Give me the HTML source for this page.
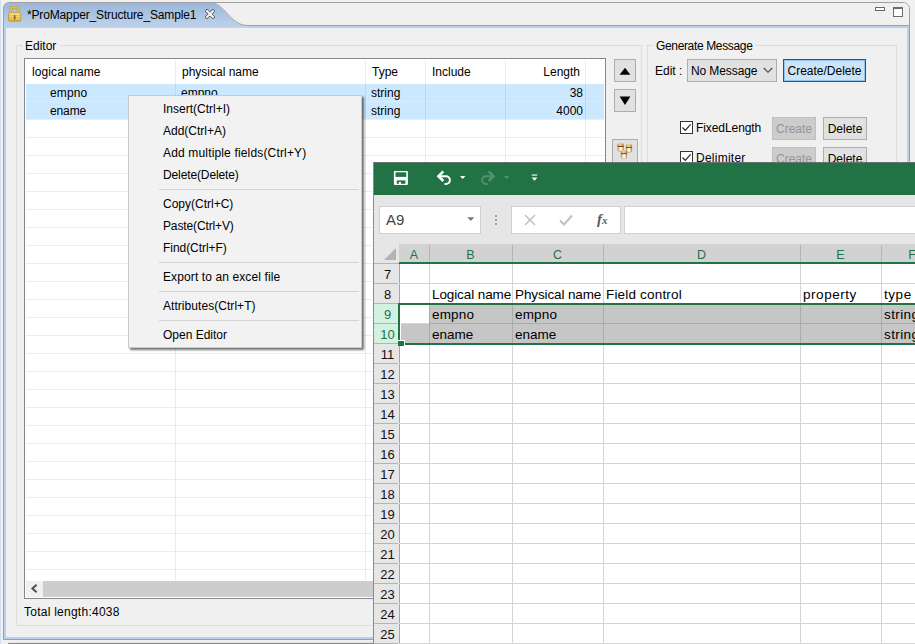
<!DOCTYPE html>
<html>
<head>
<meta charset="utf-8">
<title>ProMapper</title>
<style>
*{box-sizing:border-box;margin:0;padding:0}
html,body{width:915px;height:644px;overflow:hidden;background:#f0f0f0;font-family:"Liberation Sans",sans-serif;font-size:12px;color:#000}
.a{position:absolute}
.t{position:absolute;white-space:nowrap;line-height:14px;height:14px}
/* eclipse frame */
#frame{left:3px;top:2px;width:907px;height:638px;border:1px solid #a0a0a0;border-radius:7px 7px 0 0;background:#f0f0f0;overflow:hidden}
#tabbar{left:0;top:0;width:905px;height:23px;background:#f0f0f0;border-bottom:1px solid #a0a0a0}
#blueframe{left:0;top:23px;width:905px;height:613px;border:2px solid #b9d1ea;border-top-width:2px}
/* table */
#tbl{left:24px;top:58px;width:582px;height:541px;border:1px solid #828790;background:#fff;overflow:hidden}
.hl{position:absolute;left:1px;width:578px;height:1px;background:#ededed}
.vl{position:absolute;top:1px;width:1px;height:521px;background:rgba(0,0,0,.075)}
.sel{position:absolute;left:1px;width:578px;height:17px;background:#cce8ff}
.btn{position:absolute;border:1px solid #adadad;background:#e1e1e1;text-align:center}
/* menu */
#menu{left:128px;top:95px;width:234px;height:253px;background:#f2f2f2;border:1px solid #cacaca;box-shadow:2px 2px 2px rgba(0,0,0,.55)}
.mi{position:absolute;left:34px;white-space:nowrap;line-height:14px;height:14px}
.ms{position:absolute;left:30px;width:200px;height:1px;background:#d4d4d4}
/* excel */
#xl{left:373px;top:162px;width:542px;height:482px;background:#fff;overflow:hidden}
.xg{position:absolute;background:#d4d4d4}
.rn{position:absolute;left:2px;width:25px;text-align:center;font-size:13px;line-height:18px;height:18px;color:#111}
.ch{position:absolute;top:85px;height:19px;text-align:center;font-size:12.5px;line-height:19px;color:#217346}
.ct{position:absolute;white-space:nowrap;font-size:13.5px;line-height:18px;height:18px;color:#000}
</style>
</head>
<body>
<!-- left outer strip -->
<div class="a" style="left:0;top:0;width:1px;height:644px;background:#d6dfef"></div>

<div id="frame" class="a">
  <div id="tabbar" class="a"></div>
  <div id="blueframe" class="a"></div>
</div>

<!-- active tab shape -->
<svg class="a" style="left:0;top:0" width="300" height="30" viewBox="0 0 300 30">
  <defs>
    <linearGradient id="tg" x1="0" y1="0" x2="0" y2="1">
      <stop offset="0" stop-color="#9bb6da"/>
      <stop offset="1" stop-color="#bfd4ec"/>
    </linearGradient>
  </defs>
  <path d="M4 28 L4 9 Q4 3 10 3 L210 3 C219 3 224 11 231 18 C238 24.5 242 25.5 249 25.5 L249 28 Z" fill="url(#tg)"/>
  <path d="M3.5 28 L3.5 9 Q3.5 2.5 10 2.5 L210 2.5 C219 2.5 224 10.5 231 17.5 C238 24 242 25.5 249 25.5" fill="none" stroke="#a0a0a0" stroke-width="1"/>
</svg>

<!-- lock icon -->
<svg class="a" style="left:7px;top:5px" width="16" height="18" viewBox="0 0 16 18">
  <defs><linearGradient id="lg" x1="0" y1="0" x2="0" y2="1"><stop offset="0" stop-color="#f0cf62"/><stop offset="1" stop-color="#d9a92f"/></linearGradient></defs>
  <path d="M3.9 8.5 V4.7 Q3.9 2.2 6.4 2.2 H8.8 Q11.3 2.2 11.3 4.7 V8.5" fill="none" stroke="#c99b2a" stroke-width="2.5"/>
  <path d="M3.9 8.5 V4.7 Q3.9 2.2 6.4 2.2 H8.8 Q11.3 2.2 11.3 4.7 V8.5" fill="none" stroke="#f1d26e" stroke-width="1"/>
  <rect x="1.5" y="7.7" width="12.3" height="8.6" rx="1.2" fill="url(#lg)" stroke="#c4952a" stroke-width=".8"/>
  <rect x="2.2" y="8.4" width="10.9" height="1.2" fill="#f8e596"/>
  <rect x="2.2" y="11.2" width="10.9" height=".8" fill="#f5de85"/>
  <rect x="2.2" y="13.4" width="10.9" height=".8" fill="#f5de85"/>
  <rect x="6.8" y="10" width="1.7" height="4.8" rx=".8" fill="#8b6a16"/>
</svg>
<div class="t" style="left:27px;top:8px;font-size:12px;letter-spacing:-0.15px">*ProMapper_Structure_Sample1</div>
<!-- tab close X -->
<svg class="a" style="left:205px;top:9px" width="10" height="10" viewBox="0 0 10 10">
  <path d="M2 2 L8 8 M8 2 L2 8" stroke="#5a5a5a" stroke-width="3.4" stroke-linecap="square"/>
  <path d="M2 2 L8 8 M8 2 L2 8" stroke="#ffffff" stroke-width="1.9" stroke-linecap="square"/>
</svg>

<!-- min/max icons -->
<div class="a" style="left:875px;top:7px;width:10px;height:4px;border:1px solid #6b6b6b;background:#fff"></div>
<div class="a" style="left:893px;top:7px;width:10px;height:10px;border:1px solid #6b6b6b;border-top-width:2px;background:#fff"></div>

<!-- Editor group -->
<div class="a" style="left:16px;top:45px;width:626px;height:581px;border:1px solid #dcdcdc"></div>
<div class="t" style="left:22px;top:39px;background:#f0f0f0;padding:0 3px">Editor</div>

<div id="tbl" class="a">
  <div class="sel" style="top:25px"></div>
  <div class="sel" style="top:43px"></div>
  <!--GRID--><div class="hl" style="top:60px"></div><div class="hl" style="top:78px"></div><div class="hl" style="top:96px"></div><div class="hl" style="top:114px"></div><div class="hl" style="top:132px"></div><div class="hl" style="top:150px"></div><div class="hl" style="top:168px"></div><div class="hl" style="top:186px"></div><div class="hl" style="top:204px"></div><div class="hl" style="top:222px"></div><div class="hl" style="top:240px"></div><div class="hl" style="top:258px"></div><div class="hl" style="top:276px"></div><div class="hl" style="top:294px"></div><div class="hl" style="top:312px"></div><div class="hl" style="top:330px"></div><div class="hl" style="top:348px"></div><div class="hl" style="top:366px"></div><div class="hl" style="top:384px"></div><div class="hl" style="top:402px"></div><div class="hl" style="top:420px"></div><div class="hl" style="top:438px"></div><div class="hl" style="top:456px"></div><div class="hl" style="top:474px"></div><div class="hl" style="top:492px"></div><div class="hl" style="top:510px"></div><div class="hl" style="top:42px;background:#e2eaf0"></div><div class="vl" style="left:150px"></div><div class="vl" style="left:340px"></div><div class="vl" style="left:400px"></div><div class="vl" style="left:480px"></div><div class="vl" style="left:560px"></div><!--/GRID-->
  <!-- scrollbar -->
  <div class="a" style="left:1px;top:522px;width:578px;height:16px;background:#f0f0f0"></div>
  <div class="a" style="left:18px;top:522px;width:561px;height:16px;background:#cdcdcd"></div>
  <svg class="a" style="left:5px;top:525px" width="8" height="9" viewBox="0 0 8 9"><path d="M6.6 0.8 L2.4 4.5 L6.6 8.2" fill="none" stroke="#505050" stroke-width="2"/></svg>
  <!-- header -->
  <div class="t" style="left:7px;top:6px;letter-spacing:.1px">logical name</div>
  <div class="t" style="left:157px;top:6px">physical name</div>
  <div class="t" style="left:347px;top:6px">Type</div>
  <div class="t" style="left:407px;top:6px">Include</div>
  <div class="t" style="left:480px;top:6px;width:75px;text-align:right">Length</div>
  <!-- rows -->
  <div class="t" style="left:25px;top:27px;letter-spacing:.15px">empno</div>
  <div class="t" style="left:156px;top:27px">empno</div>
  <div class="t" style="left:346px;top:27px">string</div>
  <div class="t" style="left:480px;top:27px;width:78px;text-align:right">38</div>
  <div class="t" style="left:25px;top:45px;letter-spacing:-.12px">ename</div>
  <div class="t" style="left:346px;top:45px">string</div>
  <div class="t" style="left:480px;top:45px;width:78px;text-align:right">4000</div>
</div>

<div class="t" style="left:24px;top:605px;letter-spacing:.25px">Total length:4038</div>

<!-- up/down buttons -->
<div class="btn" style="left:614px;top:59px;width:22px;height:23px"></div>
<svg class="a" style="left:619px;top:67px" width="12" height="8" viewBox="0 0 12 8"><path d="M0.6 7.8 L6 0.8 L11.4 7.8 Z" fill="#000"/></svg>
<div class="btn" style="left:614px;top:89px;width:22px;height:23px"></div>
<svg class="a" style="left:619px;top:96px" width="12" height="10" viewBox="0 0 12 10"><path d="M0.6 0.6 L11.4 0.6 L6 9 Z" fill="#000"/></svg>
<div class="btn" style="left:612px;top:139px;width:26px;height:26px"></div>
<svg class="a" style="left:612px;top:139px" width="26" height="24" viewBox="0 0 26 24">
  <defs>
    <linearGradient id="cb" x1="0" y1="0" x2="1" y2="0">
      <stop offset="0" stop-color="#a98a52"/><stop offset=".35" stop-color="#f4f1ec"/><stop offset=".6" stop-color="#ffffff"/><stop offset="1" stop-color="#a58548"/>
    </linearGradient>
    <linearGradient id="ct" x1="0" y1="0" x2="1" y2="0">
      <stop offset="0" stop-color="#c79a3c"/><stop offset=".45" stop-color="#f0d68e"/><stop offset="1" stop-color="#b98a2e"/>
    </linearGradient>
  </defs>
  <g transform="translate(5.5 4)"><rect x="0" y="0.4" width="6.3" height="7.9" rx="1.8" fill="url(#cb)"/><path d="M0 3 V1.9 Q0 0 3.15 0 Q6.3 0 6.3 1.9 V3 Z" fill="url(#ct)"/><rect x="0.2" y="3" width="5.9" height="1" fill="#8c2f22"/><path d="M0.4 7.2 Q3.15 8.8 5.9 7.2 L5.6 7.9 Q3.15 8.9 0.7 7.9 Z" fill="#b48a3a"/></g>
  <g transform="translate(13.8 5.1)"><rect x="0" y="0.4" width="6.3" height="7.9" rx="1.8" fill="url(#cb)"/><path d="M0 3 V1.9 Q0 0 3.15 0 Q6.3 0 6.3 1.9 V3 Z" fill="url(#ct)"/><rect x="0.2" y="3" width="5.9" height="1" fill="#8c2f22"/><path d="M0.4 7.2 Q3.15 8.8 5.9 7.2 L5.6 7.9 Q3.15 8.9 0.7 7.9 Z" fill="#b48a3a"/></g>
  <g transform="translate(8.8 11.2)"><rect x="0" y="0.4" width="6.3" height="7.9" rx="1.8" fill="url(#cb)"/><path d="M0 3 V1.9 Q0 0 3.15 0 Q6.3 0 6.3 1.9 V3 Z" fill="url(#ct)"/><rect x="0.2" y="3" width="5.9" height="1" fill="#8c2f22"/><path d="M0.4 7.2 Q3.15 8.8 5.9 7.2 L5.6 7.9 Q3.15 8.9 0.7 7.9 Z" fill="#b48a3a"/></g>
</svg>

<!-- Generate Message group -->
<div class="a" style="left:647px;top:45px;width:250px;height:581px;border:1px solid #dcdcdc"></div>
<div class="t" style="left:653px;top:39px;background:#f0f0f0;padding:0 3px;letter-spacing:-.35px">Generate Message</div>
<div class="t" style="left:655px;top:64px">Edit :</div>
<div class="btn" style="left:687px;top:59px;width:90px;height:23px"></div>
<div class="t" style="left:691px;top:64px;letter-spacing:-.1px">No Message</div>
<svg class="a" style="left:763px;top:67px" width="10" height="7" viewBox="0 0 10 7"><path d="M0.8 1 L5 5.3 L9.2 1" fill="none" stroke="#444" stroke-width="1.1"/></svg>
<div class="btn" style="left:783px;top:59px;width:83px;height:23px;background:#cce4f7;border:1px solid #0a5ca8;box-shadow:inset 0 0 0 1px rgba(0,120,215,.28)"></div>
<div class="t" style="left:783px;top:64px;width:83px;text-align:center">Create/Delete</div>

<!-- checkboxes -->
<div class="a" style="left:680px;top:121px;width:13px;height:13px;border:1px solid #333;background:#fff"></div>
<svg class="a" style="left:680px;top:121px" width="13" height="13" viewBox="0 0 13 13"><path d="M2.5 6.5 L5.3 9.3 L10.6 3.3" fill="none" stroke="#222" stroke-width="1.2"/></svg>
<div class="t" style="left:696px;top:121px;letter-spacing:-.08px">FixedLength</div>
<div class="btn" style="left:772px;top:117px;width:44px;height:23px;background:#cccccc;border-color:#bfbfbf"></div>
<div class="t" style="left:772px;top:122px;width:44px;text-align:center;color:#959595">Create</div>
<div class="btn" style="left:823px;top:117px;width:44px;height:23px"></div>
<div class="t" style="left:823px;top:122px;width:44px;text-align:center">Delete</div>

<div class="a" style="left:680px;top:151px;width:13px;height:13px;border:1px solid #333;background:#fff"></div>
<svg class="a" style="left:680px;top:151px" width="13" height="13" viewBox="0 0 13 13"><path d="M2.5 6.5 L5.3 9.3 L10.6 3.3" fill="none" stroke="#222" stroke-width="1.2"/></svg>
<div class="t" style="left:696px;top:151px;letter-spacing:.25px">Delimiter</div>
<div class="btn" style="left:772px;top:147px;width:44px;height:23px;background:#cccccc;border-color:#bfbfbf"></div>
<div class="t" style="left:772px;top:152px;width:44px;text-align:center;color:#959595">Create</div>
<div class="btn" style="left:823px;top:147px;width:44px;height:23px"></div>
<div class="t" style="left:823px;top:152px;width:44px;text-align:center">Delete</div>

<!-- bottom line of next view -->
<div class="a" style="left:9px;top:642px;width:906px;height:1px;background:#e2e2e2"></div>
<div class="a" style="left:8px;top:643px;width:907px;height:1px;background:#8c8c8c"></div>

<!-- EXCEL -->
<div id="xl" class="a">
<div class="a" style="left:0;top:-1px;width:542px;height:483px">
  <div class="a" style="left:0;top:0;width:542px;height:34px;background:#217346"></div>
  <div class="a" style="left:0;top:1px;width:542px;height:1px;background:#6e6e6e"></div>
  <div class="a" style="left:0;top:34px;width:542px;height:49px;background:#e6e6e6"></div>
  <!--XL--><div class="a" style="left:1px;top:83px;width:25px;height:20px;background:#e6e6e6"></div><div class="a" style="left:26px;top:83px;width:516px;height:18px;background:#d2d2d2"></div><div class="a" style="left:26px;top:101px;width:516px;height:2px;background:#217346"></div><svg class="a" style="left:11px;top:87px" width="12" height="12" viewBox="0 0 12 12"><path d="M12 0 L12 12 L0 12 Z" fill="#b3b3b3"/></svg><div class="ch" style="left:26px;width:30px">A</div><div class="ch" style="left:56px;width:83px">B</div><div class="ch" style="left:139px;width:91px">C</div><div class="ch" style="left:230px;width:197px">D</div><div class="ch" style="left:427px;width:81px">E</div><div class="ch" style="left:508px;width:62px">F</div><div class="a" style="left:56px;top:84px;width:1px;height:17px;background:#b4b4b4"></div><div class="a" style="left:139px;top:84px;width:1px;height:17px;background:#b4b4b4"></div><div class="a" style="left:230px;top:84px;width:1px;height:17px;background:#b4b4b4"></div><div class="a" style="left:427px;top:84px;width:1px;height:17px;background:#b4b4b4"></div><div class="a" style="left:508px;top:84px;width:1px;height:17px;background:#b4b4b4"></div><div class="a" style="left:1px;top:103px;width:25px;height:380px;background:#e6e6e6"></div><div class="a" style="left:26px;top:103px;width:1px;height:380px;background:#a6a6a6"></div><div class="a" style="left:1px;top:102px;width:25px;height:1px;background:#b4b4b4"></div><div class="a" style="left:1px;top:143px;width:24px;height:40px;background:#d3f0e0"></div><div class="a" style="left:26px;top:143px;width:516px;height:40px;background:#c6c6c6"></div><div class="a" style="left:28px;top:144px;width:28px;height:19px;background:#fff"></div><div class="xg" style="left:26px;top:122px;width:516px;height:1px"></div><div class="a" style="left:1px;top:122px;width:24px;height:1px;background:#b4b4b4"></div><div class="rn" style="top:105px;color:#111">7</div><div class="xg" style="left:26px;top:142px;width:516px;height:1px"></div><div class="a" style="left:1px;top:142px;width:24px;height:1px;background:#b4b4b4"></div><div class="rn" style="top:125px;color:#111">8</div><div class="xg" style="left:26px;top:162px;width:516px;height:1px"></div><div class="a" style="left:1px;top:162px;width:24px;height:1px;background:#b4b4b4"></div><div class="rn" style="top:145px;color:#217346">9</div><div class="xg" style="left:26px;top:182px;width:516px;height:1px"></div><div class="a" style="left:1px;top:182px;width:24px;height:1px;background:#b4b4b4"></div><div class="rn" style="top:165px;color:#217346">10</div><div class="xg" style="left:26px;top:202px;width:516px;height:1px"></div><div class="a" style="left:1px;top:202px;width:24px;height:1px;background:#b4b4b4"></div><div class="rn" style="top:185px;color:#111">11</div><div class="xg" style="left:26px;top:222px;width:516px;height:1px"></div><div class="a" style="left:1px;top:222px;width:24px;height:1px;background:#b4b4b4"></div><div class="rn" style="top:205px;color:#111">12</div><div class="xg" style="left:26px;top:242px;width:516px;height:1px"></div><div class="a" style="left:1px;top:242px;width:24px;height:1px;background:#b4b4b4"></div><div class="rn" style="top:225px;color:#111">13</div><div class="xg" style="left:26px;top:262px;width:516px;height:1px"></div><div class="a" style="left:1px;top:262px;width:24px;height:1px;background:#b4b4b4"></div><div class="rn" style="top:245px;color:#111">14</div><div class="xg" style="left:26px;top:282px;width:516px;height:1px"></div><div class="a" style="left:1px;top:282px;width:24px;height:1px;background:#b4b4b4"></div><div class="rn" style="top:265px;color:#111">15</div><div class="xg" style="left:26px;top:302px;width:516px;height:1px"></div><div class="a" style="left:1px;top:302px;width:24px;height:1px;background:#b4b4b4"></div><div class="rn" style="top:285px;color:#111">16</div><div class="xg" style="left:26px;top:322px;width:516px;height:1px"></div><div class="a" style="left:1px;top:322px;width:24px;height:1px;background:#b4b4b4"></div><div class="rn" style="top:305px;color:#111">17</div><div class="xg" style="left:26px;top:342px;width:516px;height:1px"></div><div class="a" style="left:1px;top:342px;width:24px;height:1px;background:#b4b4b4"></div><div class="rn" style="top:325px;color:#111">18</div><div class="xg" style="left:26px;top:362px;width:516px;height:1px"></div><div class="a" style="left:1px;top:362px;width:24px;height:1px;background:#b4b4b4"></div><div class="rn" style="top:345px;color:#111">19</div><div class="xg" style="left:26px;top:382px;width:516px;height:1px"></div><div class="a" style="left:1px;top:382px;width:24px;height:1px;background:#b4b4b4"></div><div class="rn" style="top:365px;color:#111">20</div><div class="xg" style="left:26px;top:402px;width:516px;height:1px"></div><div class="a" style="left:1px;top:402px;width:24px;height:1px;background:#b4b4b4"></div><div class="rn" style="top:385px;color:#111">21</div><div class="xg" style="left:26px;top:422px;width:516px;height:1px"></div><div class="a" style="left:1px;top:422px;width:24px;height:1px;background:#b4b4b4"></div><div class="rn" style="top:405px;color:#111">22</div><div class="xg" style="left:26px;top:442px;width:516px;height:1px"></div><div class="a" style="left:1px;top:442px;width:24px;height:1px;background:#b4b4b4"></div><div class="rn" style="top:425px;color:#111">23</div><div class="xg" style="left:26px;top:462px;width:516px;height:1px"></div><div class="a" style="left:1px;top:462px;width:24px;height:1px;background:#b4b4b4"></div><div class="rn" style="top:445px;color:#111">24</div><div class="xg" style="left:26px;top:482px;width:516px;height:1px"></div><div class="a" style="left:1px;top:482px;width:24px;height:1px;background:#b4b4b4"></div><div class="rn" style="top:465px;color:#111">25</div><div class="xg" style="left:56px;top:103px;width:1px;height:380px"></div><div class="xg" style="left:139px;top:103px;width:1px;height:380px"></div><div class="xg" style="left:230px;top:103px;width:1px;height:380px"></div><div class="xg" style="left:427px;top:103px;width:1px;height:380px"></div><div class="xg" style="left:508px;top:103px;width:1px;height:380px"></div><div class="a" style="left:56px;top:144px;width:1px;height:39px;background:#ababab"></div><div class="a" style="left:139px;top:144px;width:1px;height:39px;background:#ababab"></div><div class="a" style="left:230px;top:144px;width:1px;height:39px;background:#ababab"></div><div class="a" style="left:427px;top:144px;width:1px;height:39px;background:#ababab"></div><div class="a" style="left:508px;top:144px;width:1px;height:39px;background:#ababab"></div><div class="a" style="left:56px;top:162px;width:486px;height:1px;background:#ababab"></div><div class="a" style="left:26px;top:142px;width:516px;height:2px;background:#217346"></div><div class="a" style="left:26px;top:182px;width:516px;height:2px;background:#217346"></div><div class="a" style="left:27px;top:144px;width:1px;height:38px;background:#fff"></div><div class="a" style="left:25px;top:142px;width:2px;height:42px;background:#217346"></div><div class="a" style="left:25px;top:179px;width:7px;height:6px;background:#217346;border-top:1px solid #fff;border-right:1px solid #fff"></div><div class="a" style="left:0;top:0;width:1px;height:483px;background:#8c8c8c"></div><div class="ct" style="left:59px;top:125px;letter-spacing:-0.1px">Logical name</div><div class="ct" style="left:142px;top:125px;letter-spacing:-0.12px">Physical name</div><div class="ct" style="left:233px;top:125px;letter-spacing:0.18px">Field control</div><div class="ct" style="left:430px;top:125px;letter-spacing:0.55px">property</div><div class="ct" style="left:511px;top:125px;letter-spacing:0.55px">type</div><div class="ct" style="left:59px;top:145px;letter-spacing:0.18px">empno</div><div class="ct" style="left:142px;top:145px;letter-spacing:0.18px">empno</div><div class="ct" style="left:511px;top:145px;letter-spacing:0.4px">string</div><div class="ct" style="left:59px;top:165px;letter-spacing:0px">ename</div><div class="ct" style="left:142px;top:165px;letter-spacing:0px">ename</div><div class="ct" style="left:511px;top:165px;letter-spacing:0.4px">string</div><div class="a" style="left:6px;top:45px;width:102px;height:28px;background:#fff;border:1px solid #d0d0d0"></div><div class="a" style="left:13px;top:50px;font-size:15px;line-height:18px;color:#444">A9</div><svg class="a" style="left:94px;top:56px" width="8" height="5" viewBox="0 0 8 5"><path d="M0.3 0.3 L7.3 0.3 L3.8 4 Z" fill="#777"/></svg><div class="a" style="left:122px;top:54px;width:2px;height:2px;background:#a0a0a0;box-shadow:0 4px 0 #a0a0a0,0 8px 0 #a0a0a0"></div><div class="a" style="left:138px;top:45px;width:110px;height:28px;background:#fff;border:1px solid #d0d0d0"></div><svg class="a" style="left:151px;top:53px" width="12" height="12" viewBox="0 0 12 12"><path d="M1 1 L11 11 M11 1 L1 11" stroke="#c0c0c0" stroke-width="1.5" fill="none"/></svg><svg class="a" style="left:186px;top:53px" width="14" height="12" viewBox="0 0 14 12"><path d="M1 6.5 L5 10.5 L13 1.5" stroke="#c0c0c0" stroke-width="2" fill="none"/></svg><div class="a" style="left:224px;top:49px;font-family:'Liberation Serif',serif;font-style:italic;font-weight:bold;font-size:15px;line-height:18px;color:#5a5a5a">f<span style="font-size:11px">x</span></div><div class="a" style="left:251px;top:45px;width:300px;height:28px;background:#fff;border:1px solid #d0d0d0"></div><svg class="a" style="left:20px;top:9px" width="16" height="16" viewBox="20 9 16 16"><rect x="20.9" y="10" width="14" height="14" rx="1" fill="#fff"/><rect x="22.5" y="11.3" width="10.8" height="4.6" fill="#217346"/><rect x="23.8" y="19.2" width="8.6" height="3.6" fill="#217346"/><rect x="25.9" y="20.9" width="2" height="2.1" fill="#fff"/><path d="M22 15.9 L23.4 19.2 H32.8 L33.9 15.9 Z" fill="#fff"/></svg><svg class="a" style="left:62px;top:8px" width="18" height="18" viewBox="62 8 18 18"><path d="M66 15.2 H73 a3.9 3.9 0 0 1 0 7.8 H71.5" fill="none" stroke="#fff" stroke-width="2"/><path d="M70.3 10.4 L65.5 15.2 L70.3 20" fill="none" stroke="#fff" stroke-width="2.6"/></svg><svg class="a" style="left:87px;top:15px" width="6" height="4" viewBox="0 0 6 4"><path d="M0 0 L5.4 0 L2.7 3 Z" fill="#fff"/></svg><svg class="a" style="left:106px;top:8px" width="18" height="18" viewBox="106 8 18 18"><path d="M120 15.2 H113 a3.9 3.9 0 0 0 0 7.8 H114.5" fill="none" stroke="#4f946f" stroke-width="2"/><path d="M115.7 10.4 L120.5 15.2 L115.7 20" fill="none" stroke="#4f946f" stroke-width="2.6"/></svg><svg class="a" style="left:131px;top:15px" width="6" height="4" viewBox="0 0 6 4"><path d="M0 0 L5.4 0 L2.7 3 Z" fill="#4f946f"/></svg><svg class="a" style="left:158px;top:13px" width="7" height="8" viewBox="0 0 7 8"><rect x="0.8" y="0.5" width="5.4" height="1.1" fill="#fff"/><path d="M0.6 3.4 L6.4 3.4 L3.5 6.8 Z" fill="#fff"/></svg><!--/XL-->
</div>
</div>

<!-- context menu -->
<div id="menu" class="a">
  <div class="mi" style="top:6px">Insert(Ctrl+I)</div>
  <div class="mi" style="top:28px">Add(Ctrl+A)</div>
  <div class="mi" style="top:50px;letter-spacing:0.16px">Add multiple fields(Ctrl+Y)</div>
  <div class="mi" style="top:72px;letter-spacing:-0.12px">Delete(Delete)</div>
  <div class="ms" style="top:93px"></div>
  <div class="mi" style="top:101px">Copy(Ctrl+C)</div>
  <div class="mi" style="top:123px;letter-spacing:-0.13px">Paste(Ctrl+V)</div>
  <div class="mi" style="top:145px;letter-spacing:-0.05px">Find(Ctrl+F)</div>
  <div class="ms" style="top:166px"></div>
  <div class="mi" style="top:174px;letter-spacing:0.11px">Export to an excel file</div>
  <div class="ms" style="top:195px"></div>
  <div class="mi" style="top:203px;letter-spacing:0.05px">Attributes(Ctrl+T)</div>
  <div class="ms" style="top:224px"></div>
  <div class="mi" style="top:232px">Open Editor</div>
</div>
</body>
</html>
